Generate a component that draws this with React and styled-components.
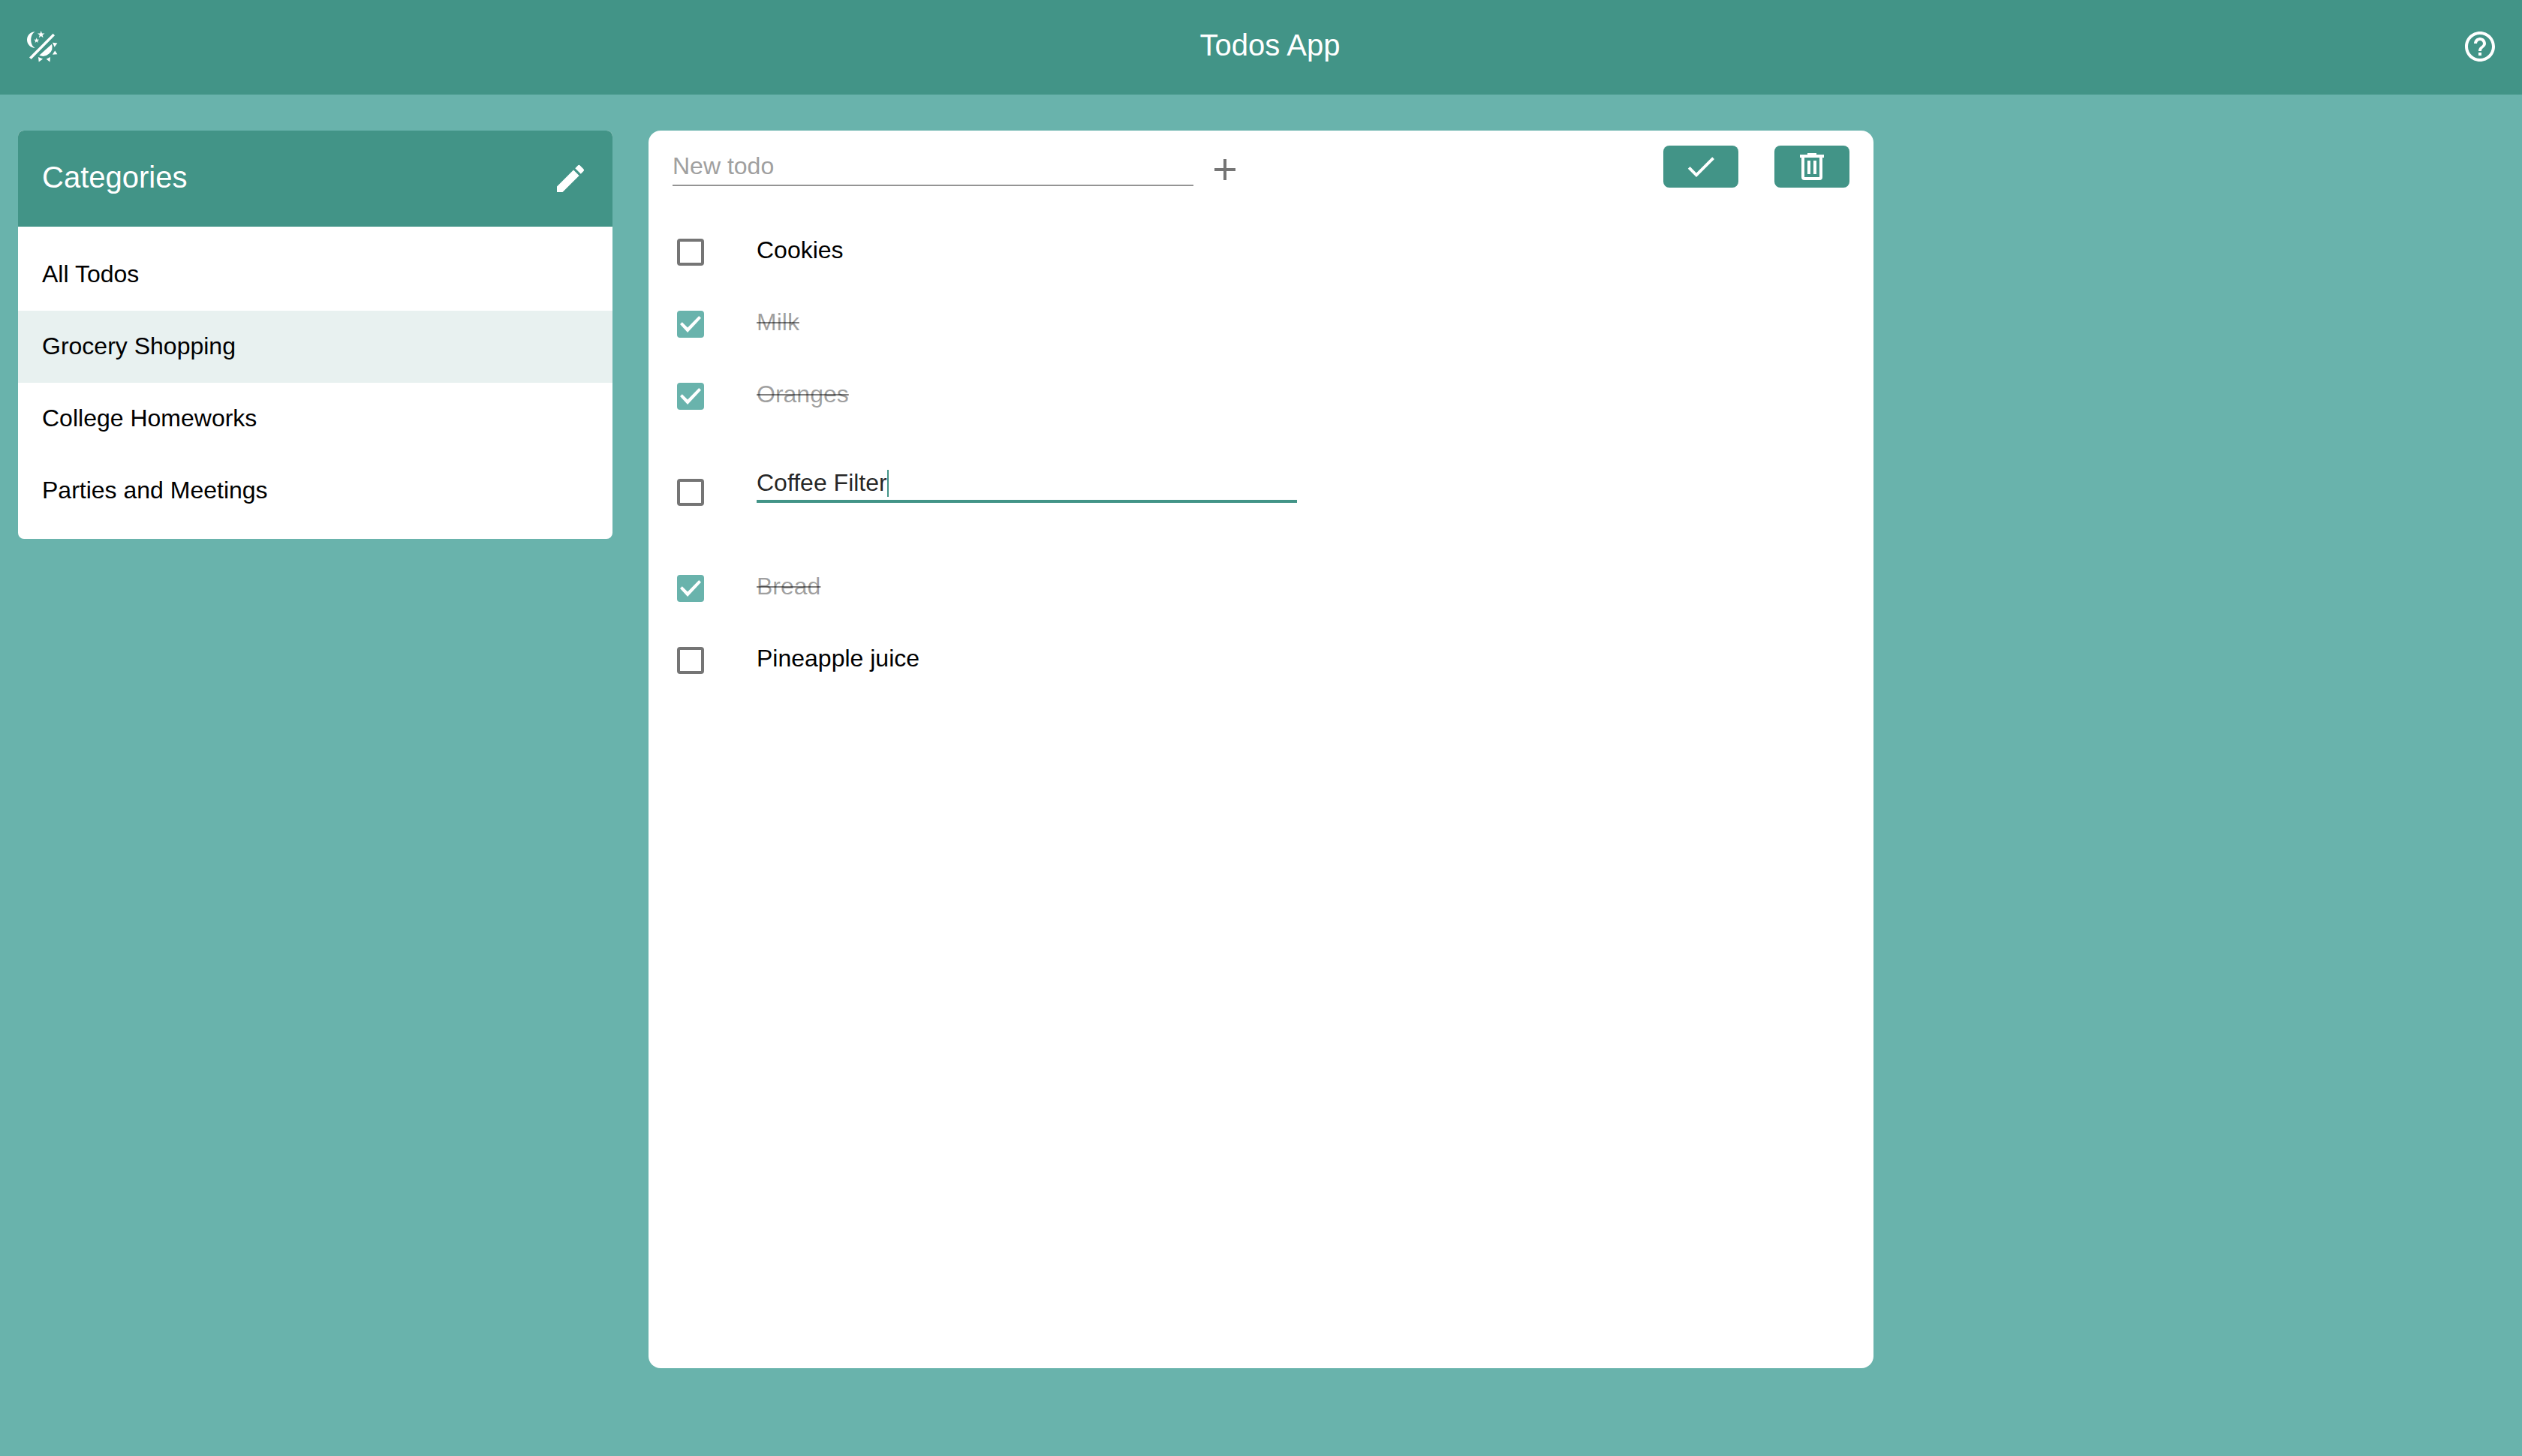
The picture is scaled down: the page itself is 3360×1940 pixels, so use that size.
import React, { useState } from "react";
import styled, { createGlobalStyle, ThemeProvider } from "styled-components";

const theme = {
  primary: "#429487",
  background: "#69b3ac",
  selected: "#e8f1f0",
  muted: "#757575",
};

const GlobalStyle = createGlobalStyle`
  *, *::before, *::after { box-sizing: border-box; }
  body {
    margin: 0;
    min-height: 100vh;
    background: ${theme.background};
    font: 32px/48px Helvetica, "Liberation Sans", Arial, sans-serif;
    color: #000;
  }
  button, input { font: inherit; color: inherit; }
`;

const AppBar = styled.header`
  display: flex;
  align-items: center;
  padding: 14px 8px 16px;
  background: ${(p) => p.theme.primary};
  color: #fff;
`;

const Title = styled.h1`
  flex: 1;
  margin: 0;
  padding: 0 0 4px 24px;
  font-size: 40px;
  font-weight: 400;
  line-height: 64px;
  text-align: center;
`;

const IconButton = styled.button`
  display: flex;
  flex: none;
  padding: ${(p) => p.$pad || 0}px;
  border: 0;
  border-radius: 50%;
  background: none;
  color: ${(p) => p.$color || "inherit"};
  cursor: pointer;
`;

const Icon = styled.svg`
  display: block;
  width: 48px;
  height: 48px;
  fill: currentColor;
`;

const Columns = styled.main`
  display: grid;
  grid-template-columns: 1fr 2fr 1fr;
  align-items: start;
  padding: 48px 0;
`;

const Column = styled.div`
  min-width: 0;
  padding: 0 24px;
`;

const Sidebar = styled.nav`
  overflow: hidden;
  border-radius: 8px;
  background: #fff;
`;

const SidebarHeader = styled.div`
  display: flex;
  align-items: center;
  justify-content: space-between;
  padding: 32px;
  background: ${(p) => p.theme.primary};
  color: #fff;
`;

const SidebarTitle = styled.h2`
  margin: 0;
  padding-bottom: 4px;
  font-size: 40px;
  font-weight: 400;
  line-height: 60px;
`;

const CategoryList = styled.ul`
  margin: 0;
  padding: 16px 0;
  list-style: none;
`;

const CategoryLink = styled.a`
  display: block;
  padding: 23px 32px 25px;
  background: ${(p) => (p.$selected ? p.theme.selected : "transparent")};
  color: inherit;
  text-decoration: none;
`;

const Panel = styled.section`
  min-height: 85vh;
  border-radius: 16px;
  background: #fff;
`;

const Toolbar = styled.div`
  display: flex;
  justify-content: space-between;
  padding: 20px 32px 22px;
`;

const NewTodoForm = styled.form`
  display: flex;
  flex: 0 1 760px;
  align-items: flex-end;
  gap: 18px;
`;

const NewTodoInput = styled.input`
  flex: 1;
  align-self: center;
  min-width: 0;
  height: 52px;
  padding: 0;
  border: 0;
  border-bottom: 2px solid #949494;
  outline: 0;
  background: none;

  &::placeholder {
    color: #a0a0a0;
    opacity: 1;
  }
`;

const Actions = styled.div`
  display: flex;
  gap: 48px;
`;

const ActionButton = styled.button`
  display: flex;
  align-items: center;
  justify-content: center;
  width: 100px;
  height: 56px;
  padding: 0;
  border: 0;
  border-radius: 8px;
  background: ${(p) => p.theme.primary};
  color: #fff;
  cursor: pointer;
`;

const TodoList = styled.ul`
  margin: 0;
  padding: 16px 0;
  list-style: none;
`;

const TodoRow = styled.li`
  display: flex;
  align-items: center;
  gap: 64px;
  min-height: ${(p) => (p.$editing ? 160 : 96)}px;
  padding: 0 32px;
`;

const Checkbox = styled.input`
  appearance: none;
  display: grid;
  place-items: center;
  flex: none;
  width: 36px;
  height: 36px;
  margin: 0 6px;
  border: 4px solid ${(p) => p.theme.muted};
  border-radius: 4px;
  cursor: pointer;

  &:checked {
    border-color: ${(p) => p.theme.background};
    background: ${(p) => p.theme.background};
  }

  &:checked::before {
    content: "";
    width: 28px;
    height: 22px;
    background: #fff;
    clip-path: polygon(0 50%, 10% 37%, 36% 70%, 90% 0, 100% 13%, 36% 100%);
  }
`;

const TodoLabel = styled.label`
  padding-bottom: 6px;
  color: ${(p) => (p.$done ? "rgba(0, 0, 0, 0.38)" : "#000")};
  text-decoration: ${(p) => (p.$done ? "line-through 2px rgba(0, 0, 0, 0.5)" : "none")};
`;

const EditSlot = styled.div`
  flex: 0 1 720px;
  padding-bottom: 36px;
`;

const EditField = styled.div`
  display: flex;
  align-items: flex-end;
  height: 64px;
  padding-bottom: 4px;
  border-bottom: 4px solid ${(p) => p.theme.primary};
`;

const EditInput = styled.input`
  field-sizing: content;
  height: 38px;
  padding: 0;
  border: 0;
  outline: 0;
  background: none;
  color: rgba(0, 0, 0, 0.87);
  line-height: 38px;
`;

const Caret = styled.span`
  width: 2px;
  height: 36px;
  background: ${(p) => p.theme.primary};
`;

const ThemeIcon = () => (
  <Icon viewBox="32 38 48 48" aria-hidden="true">
    <path d="M46.8 42.2 A10.8 10.8 0 0 0 46.8 63.8 C39.5 60.5 39.5 45.5 46.8 42.2Z" />
    <path d="M54.7 41l1.2 3.4 3.6.1-2.9 2.2 1 3.5-2.9-2.1-2.9 2.1 1-3.5-2.9-2.2 3.6-.1z" />
    <path d="M48.7 50.2l.9 2.5 2.6.1-2.1 1.6.7 2.6-2.1-1.5-2.1 1.5.7-2.6-2.1-1.6 2.6-.1z" />
    <path d="M70.6 44.8l2.4 2.4L41.6 78.9l-2.6-2.5z" />
    <path d="M69 58.7 A12.4 12.4 0 0 1 52.3 73.8Z" />
    <path d="M70 56.8l6.4.8-3.8 5.1zM73.2 67.4l3.2 4.9-6.5.4zM51 76l6.1 2.6-5.4 3.8zM61.7 78.7L67 76l-.5 6.4z" />
  </Icon>
);

const HelpIcon = () => (
  <Icon viewBox="0 0 24 24" aria-hidden="true">
    <path d="M11 18h2v-2h-2v2zm1-16C6.48 2 2 6.48 2 12s4.48 10 10 10 10-4.48 10-10S17.52 2 12 2zm0 18c-4.41 0-8-3.59-8-8s3.59-8 8-8 8 3.59 8 8-3.59 8-8 8zm0-14c-2.21 0-4 1.79-4 4h2c0-1.1.9-2 2-2s2 .9 2 2c0 2-3 1.75-3 5h2c0-2.25 3-2.5 3-5 0-2.21-1.79-4-4-4z" />
  </Icon>
);

const EditIcon = () => (
  <Icon viewBox="0 0 24 24" aria-hidden="true">
    <path d="M3 17.25V21h3.75L17.81 9.94l-3.75-3.75L3 17.25zM20.71 7.04c.39-.39.39-1.02 0-1.41l-2.34-2.34a.9959.9959 0 0 0-1.41 0l-1.83 1.83 3.75 3.75 1.83-1.83z" />
  </Icon>
);

const AddIcon = () => (
  <Icon viewBox="0 0 24 24" aria-hidden="true">
    <path d="M19 13h-6v6h-2v-6H5v-2h6V5h2v6h6v2z" />
  </Icon>
);

const DoneIcon = () => (
  <Icon viewBox="0 0 24 24" aria-hidden="true">
    <path d="M9 16.2L4.8 12l-1.4 1.4L9 19 21 7l-1.4-1.4L9 16.2z" />
  </Icon>
);

const DeleteIcon = () => (
  <Icon viewBox="0 0 24 24" aria-hidden="true">
    <path d="M9 3v1H4v2h1v13a2 2 0 0 0 2 2h10a2 2 0 0 0 2-2V6h1V4h-5V3H9zM7 6h10v13H7V6zm2 2v9h2V8H9zm4 0v9h2V8h-2z" />
  </Icon>
);

const categories = ["All Todos", "Grocery Shopping", "College Homeworks", "Parties and Meetings"];

const initialTodos = [
  { id: 1, text: "Cookies", done: false },
  { id: 2, text: "Milk", done: true },
  { id: 3, text: "Oranges", done: true },
  { id: 4, text: "Coffee Filter", done: false, editing: true },
  { id: 5, text: "Bread", done: true },
  { id: 6, text: "Pineapple juice", done: false },
];

export default function App() {
  const [todos, setTodos] = useState(initialTodos);
  const [selected, setSelected] = useState("Grocery Shopping");
  const [draft, setDraft] = useState("");

  const update = (id, change) =>
    setTodos((list) => list.map((todo) => (todo.id === id ? { ...todo, ...change } : todo)));

  const addTodo = (event) => {
    event.preventDefault();
    if (!draft.trim()) return;
    setTodos((list) => [...list, { id: Date.now(), text: draft.trim(), done: false }]);
    setDraft("");
  };

  return (
    <ThemeProvider theme={theme}>
      <GlobalStyle />
      <AppBar>
        <IconButton type="button" $pad={24} aria-label="Toggle theme">
          <ThemeIcon />
        </IconButton>
        <Title>Todos App</Title>
        <IconButton type="button" $pad={24} aria-label="Help">
          <HelpIcon />
        </IconButton>
      </AppBar>
      <Columns>
        <Column>
          <Sidebar aria-label="Categories">
            <SidebarHeader>
              <SidebarTitle>Categories</SidebarTitle>
              <IconButton type="button" aria-label="Edit categories">
                <EditIcon />
              </IconButton>
            </SidebarHeader>
            <CategoryList>
              {categories.map((name) => (
                <li key={name}>
                  <CategoryLink
                    href="#"
                    $selected={name === selected}
                    aria-current={name === selected ? "page" : undefined}
                    onClick={(event) => {
                      event.preventDefault();
                      setSelected(name);
                    }}
                  >
                    {name}
                  </CategoryLink>
                </li>
              ))}
            </CategoryList>
          </Sidebar>
        </Column>
        <Column>
          <Panel>
            <Toolbar>
              <NewTodoForm onSubmit={addTodo}>
                <NewTodoInput
                  type="text"
                  placeholder="New todo"
                  aria-label="New todo"
                  value={draft}
                  onChange={(event) => setDraft(event.target.value)}
                />
                <IconButton type="submit" $color={theme.muted} aria-label="Add todo">
                  <AddIcon />
                </IconButton>
              </NewTodoForm>
              <Actions>
                <ActionButton
                  type="button"
                  aria-label="Complete all"
                  onClick={() => setTodos((list) => list.map((todo) => ({ ...todo, done: true })))}
                >
                  <DoneIcon />
                </ActionButton>
                <ActionButton
                  type="button"
                  aria-label="Delete completed"
                  onClick={() => setTodos((list) => list.filter((todo) => !todo.done))}
                >
                  <DeleteIcon />
                </ActionButton>
              </Actions>
            </Toolbar>
            <TodoList>
              {todos.map((todo) => (
                <TodoRow key={todo.id} $editing={todo.editing}>
                  <Checkbox
                    type="checkbox"
                    id={`todo-${todo.id}`}
                    checked={todo.done}
                    aria-label={todo.text}
                    onChange={(event) => update(todo.id, { done: event.target.checked })}
                  />
                  {todo.editing ? (
                    <EditSlot>
                      <EditField>
                        <EditInput
                          type="text"
                          aria-label="Edit todo"
                          value={todo.text}
                          onChange={(event) => update(todo.id, { text: event.target.value })}
                        />
                        <Caret />
                      </EditField>
                    </EditSlot>
                  ) : (
                    <TodoLabel htmlFor={`todo-${todo.id}`} $done={todo.done}>
                      {todo.text}
                    </TodoLabel>
                  )}
                </TodoRow>
              ))}
            </TodoList>
          </Panel>
        </Column>
      </Columns>
    </ThemeProvider>
  );
}
